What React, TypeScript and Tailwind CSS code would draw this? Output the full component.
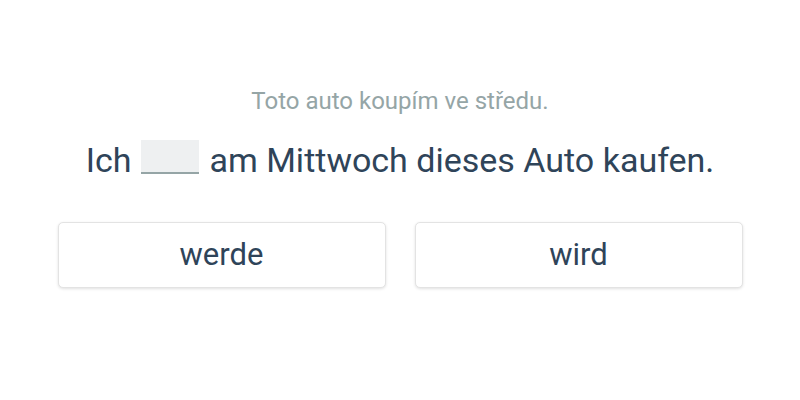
export default function App() {
  return (
    <div className="w-[800px] h-[400px] bg-white flex flex-col items-center font-['Roboto',sans-serif] text-[#2c3e50]">
      <p className="mt-[86px] text-[24px] leading-[30px] text-[#95a5a6]">Toto auto koupím ve středu.</p>
      <p className="mt-[22px] text-[34px] leading-[44px] flex items-start text-[#2f4459]">
        <span>Ich</span>
        <span className="inline-block w-[58px] h-[34px] mx-[10px] mt-[2px] bg-[#eef0f1] border-b-2 border-[#95a5a6]"></span>
        <span>am Mittwoch dieses Auto kaufen.</span>
      </p>
      <div className="mt-[40px] flex gap-[29px]">
        <button className="w-[328px] h-[66px] rounded-[5px] bg-white border border-[#e3e3e3] shadow-[0_1px_3px_rgba(0,0,0,0.12)] text-[31px] text-[#2f4459]">werde</button>
        <button className="w-[328px] h-[66px] rounded-[5px] bg-white border border-[#e3e3e3] shadow-[0_1px_3px_rgba(0,0,0,0.12)] text-[31px] text-[#2f4459]">wird</button>
      </div>
    </div>
  );
}
